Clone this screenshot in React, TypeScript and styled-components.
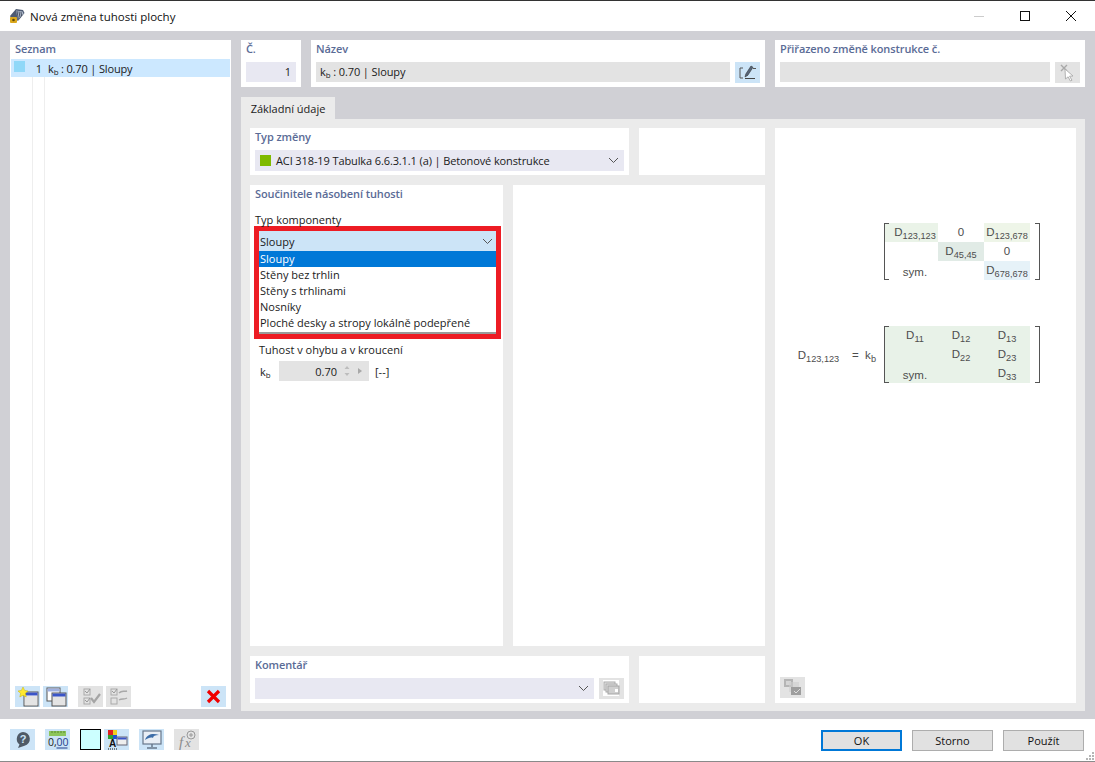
import styled, { createGlobalStyle } from "styled-components";

const GlobalStyle = createGlobalStyle`
  html, body {
    margin: 0;
    padding: 0;
    overflow: hidden;
    background: #fff;
  }
  * {
    box-sizing: border-box;
  }
`;

const UI_FONT = `"Open Sans", "Noto Sans", "Liberation Sans", sans-serif`;

const Window = styled.div`
  width: 1095px;
  height: 762px;
  display: flex;
  flex-direction: column;
  background: #fff;
  border-top: 1px solid #333;
  border-bottom: 1px solid #8a8a8a;
  font-family: ${UI_FONT};
  font-size: 11px;
  color: #1a1a1a;
`;

const TitleBar = styled.div`
  height: 30px;
  flex: none;
  display: flex;
  align-items: center;
  padding-left: 9px;
`;

const TitleText = styled.span`
  margin-left: 5px;
  font-size: 11.5px;
  color: #111;
`;

const WindowControls = styled.div`
  margin-left: auto;
  display: flex;
  align-items: center;
  margin-right: 19px;
  gap: 36px;
`;

const Body = styled.div`
  height: 688px;
  flex: none;
  background: #d0d0d5;
  padding: 9px 10px 0;
  display: flex;
  gap: 10px;
`;

const ListPanel = styled.div`
  width: 221px;
  height: 669px;
  background: #fff;
  display: flex;
  flex-direction: column;
  padding: 0 1px;
`;

const PanelTitle = styled.div`
  height: 18px;
  line-height: 18px;
  margin-bottom: 4px;
  font-weight: 600;
  font-size: 11px;
  letter-spacing: -0.1px;
  color: #5a6b96;
  white-space: nowrap;
`;

const ListTitle = styled(PanelTitle)`
  height: 19px;
  line-height: 18px;
  margin: 0;
  padding-left: 4px;
`;

const ListRow = styled.div`
  height: 18px;
  flex: none;
  background: #cce8ff;
  display: flex;
  align-items: center;
  padding-left: 3px;
`;

const ListSwatch = styled.span`
  width: 11px;
  height: 11px;
  margin-top: -3px;
  background: #90d8f8;
`;

const ListNumber = styled.span`
  width: 16px;
  margin-left: 1px;
  text-align: right;
`;

const ListText = styled.span`
  margin-left: 6px;
  letter-spacing: -0.15px;
`;

const Guides = styled.div`
  flex: 1;
  width: 13px;
  margin-left: 21px;
  border-left: 1px solid #eeeeee;
  border-right: 1px solid #eeeeee;
`;

const ListToolbar = styled.div`
  height: 28px;
  flex: none;
  display: flex;
  padding: 5px 4px 2px;
  gap: 3px;
`;

const ToolGap = styled.span<{ $w: number }>`
  width: ${(p) => p.$w}px;
  flex: none;
`;

const IconButton = styled.div<{ $off?: boolean }>`
  width: 25px;
  height: 21px;
  flex: none;
  display: flex;
  align-items: center;
  justify-content: center;
  background: ${(p) => (p.$off ? "#e3e3e3" : "#cce4f7")};
`;

const RightColumn = styled.div`
  width: 844px;
  display: flex;
  flex-direction: column;
`;

const TopRow = styled.div`
  display: flex;
  gap: 10px;
  height: 47px;
  flex: none;
`;

const Panel = styled.div<{ $w: number; $h?: number }>`
  width: ${(p) => p.$w}px;
  height: ${(p) => p.$h ?? 47}px;
  flex: none;
  background: #fff;
  padding: 0 5px;
`;

const FieldRow = styled.div`
  display: flex;
  gap: 5px;
`;

const Field = styled.div<{ $bg?: string; $right?: boolean }>`
  height: 20px;
  flex: 1;
  background: ${(p) => p.$bg ?? "#e3e3e3"};
  display: flex;
  align-items: center;
  justify-content: ${(p) => (p.$right ? "flex-end" : "flex-start")};
  padding: 0 5px 1px 4px;
  letter-spacing: -0.1px;
`;

const Select = styled.div<{ $w?: number }>`
  height: 21px;
  ${(p) => (p.$w ? `width: ${p.$w}px; flex: none;` : "")}
  background: #e8e8f2;
  display: flex;
  align-items: center;
  padding: 0 5px;
  justify-content: space-between;
`;

const SelectValue = styled.span`
  display: flex;
  align-items: center;
  gap: 5px;
  letter-spacing: -0.11px;
`;

const GreenSquare = styled.span`
  width: 11px;
  height: 11px;
  background: #7fba00;
`;

const Tab = styled.div`
  margin-top: 10px;
  width: 94px;
  height: 22px;
  flex: none;
  background: #ebebeb;
  display: flex;
  align-items: center;
  justify-content: center;
`;

const TabPage = styled.div`
  height: 592px;
  flex: none;
  background: #ebebeb;
  padding: 9px 9px 8px;
  display: flex;
  gap: 10px;
`;

const FormColumn = styled.div`
  width: 515px;
  display: flex;
  flex-direction: column;
  gap: 10px;
`;

const FormRow = styled.div`
  display: flex;
  gap: 10px;
`;

const FieldLabel = styled.div`
  margin-top: 10px;
  height: 13px;
  line-height: 13px;
`;

const Annotation = styled.div`
  width: 247px;
  height: 113px;
  margin-left: -1px;
  border: 5px solid #ed1c24;
  background: #fff;
`;

const OpenSelect = styled.div`
  height: 20px;
  background: #cce4f7;
  display: flex;
  align-items: center;
  justify-content: space-between;
  padding: 0 3px 0 1px;
`;

const OptionList = styled.div`
  border-bottom: 2px solid #9a9a9a;
  height: 83px;
`;

const Option = styled.div<{ $active?: boolean }>`
  height: 16px;
  line-height: 16px;
  padding-left: 1px;
  white-space: nowrap;
  background: ${(p) => (p.$active ? "#0078d7" : "#fff")};
  color: ${(p) => (p.$active ? "#fff" : "#1a1a1a")};
`;

const StiffnessLabel = styled.div`
  margin: 4px 0 0 4px;
  height: 14px;
  line-height: 14px;
`;

const StiffnessRow = styled.div`
  margin: 4px 0 0 5px;
  display: flex;
  align-items: center;
`;

const Symbol = styled.span`
  width: 19px;
`;

const Sub = styled.sub`
  font-size: 0.72em;
  vertical-align: -0.3em;
  line-height: 0;
`;

const DrawSub = styled(Sub)`
  font-size: 9.2px;
  vertical-align: -0.35em;
`;

const NumberBox = styled.div`
  width: 90px;
  height: 20px;
  background: #e3e3e3;
  display: flex;
  align-items: center;
  justify-content: flex-end;
  padding-right: 2px;
  gap: 4px;
`;

const Unit = styled.span`
  margin-left: 6px;
`;

const DrawingPanel = styled.div`
  width: 301px;
  background: #fff;
  display: flex;
  flex-direction: column;
  align-items: flex-end;
  padding: 95px 36px 5px 5px;
  font-family: "Liberation Sans", Arial, sans-serif;
  font-size: 11.5px;
  color: #4d4d4d;
`;

const Formula = styled.div`
  margin-top: 46px;
  display: flex;
  align-items: center;
`;

const FormulaLabel = styled.span`
  margin-right: 8px;
  white-space: pre;
`;

const Matrix = styled.div`
  position: relative;
  width: 156px;
  display: grid;
  grid-template-columns: 53px 46px 46px;
  grid-auto-rows: 19px;
  padding-left: 1px;
  &::before,
  &::after {
    content: "";
    position: absolute;
    top: 0;
    bottom: 0;
    width: 4px;
    border: 1.5px solid #555;
  }
  &::before {
    left: 0;
    border-right: 0;
  }
  &::after {
    right: 0;
    border-left: 0;
  }
`;

const Cell = styled.div<{ $bg?: string }>`
  line-height: 19px;
  text-align: center;
  background: ${(p) => p.$bg ?? "transparent"};
  white-space: nowrap;
  &:nth-child(3n + 1) {
    padding-left: 7px;
  }
`;

const SymCell = styled(Cell)`
  padding-top: 2px;
`;

const CornerButton = styled(IconButton)`
  margin-top: auto;
  align-self: flex-start;
`;

const BottomBar = styled.div`
  flex: 1;
  display: flex;
  align-items: flex-start;
  padding: 10px 11px 0 10px;
  position: relative;
`;

const Swatch = styled.div`
  width: 21px;
  height: 21px;
  flex: none;
  background: #ccffff;
  border: 1.5px solid #000;
`;

const DialogButtons = styled.div`
  margin-left: auto;
  display: flex;
  gap: 10px;
  margin-top: 1px;
`;

const DialogButton = styled.div<{ $primary?: boolean }>`
  width: 81px;
  height: 21px;
  display: flex;
  align-items: center;
  justify-content: center;
  background: #e1e1e1;
  border: ${(p) => (p.$primary ? "2px solid #0078d7" : "1px solid #adadad")};
  color: #111;
`;

const Grip = styled.svg`
  position: absolute;
  right: 1px;
  bottom: 1px;
`;

const Chevron = () => (
  <svg width="11" height="7" viewBox="0 0 11 7" fill="none">
    <path d="M1 1l4.5 4.5L10 1" stroke="#555" strokeWidth="1" />
  </svg>
);

const RollIcon = () => (
  <svg width="16" height="16" viewBox="0 0 16 16">
    <path d="M1 8l6-7 7 1 1.500 3-6 7.500-6 .5z" fill="#4d5a72" />
    <path d="M7 2.500l6.500 1 1 2-5.600 6.200z" fill="#aeb9ca" />
    <path d="M8 3l1.300 8M10 3.500l1 6M12 4l.6 4" stroke="#3e475a" strokeWidth=".9" />
    <rect x="1" y="9" width="7" height="6" rx="1" fill="#dba81c" />
    <circle cx="4.500" cy="12" r="1.300" fill="#5c470c" />
  </svg>
);

const EditIcon = () => (
  <svg width="21" height="17" viewBox="0 0 21 17" fill="none">
    <path d="M6 4H3v10h3" stroke="#555" strokeWidth="1" />
    <path d="M8 14.500h10" stroke="#444" strokeWidth="1" />
    <path d="M8 13l.8-3 5.200-8 2 1.300-5.200 8z" fill="#56657a" stroke="#333" strokeWidth=".6" />
    <path d="M16 4.500h3" stroke="#555" strokeWidth="1" />
  </svg>
);

const PickIcon = () => (
  <svg width="18" height="18" viewBox="0 0 18 18" fill="none">
    <path d="M2 1l6 6M8 1L2 7" stroke="#a8a8a8" strokeWidth="1.400" />
    <path d="M6 5l8 7-3.500.2 2.500 4-1.600.8-2.300-4.200L6.500 15z" fill="#fff" stroke="#aaa" strokeWidth=".9" />
  </svg>
);

const NewIcon = () => (
  <svg width="25" height="21" viewBox="0 0 25 21">
    <rect x="9" y="6" width="14" height="14" fill="#fff" stroke="#555" />
    <rect x="9.500" y="6.500" width="13" height="3" fill="#3a55c8" />
    <rect x="10" y="10" width="12" height="9" fill="#e4e4e4" />
    <path d="M8 1l1.600 3.400L13 5l-2.600 2.300.8 3.700L8 9.200 4.800 11l.8-3.700L3 5l3.400-.6z" fill="#ffe930" stroke="#c9b400" strokeWidth=".5" />
  </svg>
);

const CopyIcon = () => (
  <svg width="25" height="21" viewBox="0 0 25 21">
    <rect x="4" y="2" width="13" height="13" fill="#fff" stroke="#555" />
    <rect x="4.500" y="2.500" width="12" height="3" fill="#9fb0e0" />
    <rect x="9" y="7" width="14" height="13" fill="#e4e4e4" stroke="#555" />
    <rect x="9.500" y="7.500" width="13" height="3" fill="#3a55c8" />
  </svg>
);

const CheckAllIcon = () => (
  <svg width="25" height="21" viewBox="0 0 25 21" fill="none">
    <rect x="6" y="3" width="6" height="6" stroke="#aaa" />
    <rect x="6" y="12" width="6" height="6" stroke="#aaa" />
    <path d="M7 5l2 2 3-4M7 14l2 2 3-4" stroke="#999" />
    <path d="M13 12l3 4 6-8" stroke="#a5a5a5" strokeWidth="2.200" />
  </svg>
);

const CheckSwapIcon = () => (
  <svg width="25" height="21" viewBox="0 0 25 21" fill="none">
    <rect x="5" y="3" width="6" height="6" stroke="#aaa" />
    <rect x="5" y="12" width="6" height="6" stroke="#aaa" />
    <path d="M6 5l2 2 3-4" stroke="#999" />
    <path d="M13 7c3-3 5-1 8-2M21 12c-3 2-5 0-8 2" stroke="#a8a8a8" strokeWidth="1.500" />
  </svg>
);

const DeleteIcon = () => (
  <svg width="15" height="15" viewBox="0 0 15 15" fill="none">
    <path d="M2 2l11 11M13 2L2 13" stroke="#f00000" strokeWidth="3.200" />
  </svg>
);

const WindowsIcon = () => (
  <svg width="25" height="21" viewBox="0 0 25 21">
    <rect x="4" y="2" width="16" height="16" fill="#fff" />
    <rect x="5" y="4" width="11" height="8" fill="#e3e3e3" stroke="#aaa" />
    <rect x="7" y="6" width="11" height="8" fill="#dedede" stroke="#aaa" />
    <rect x="9" y="8" width="11" height="8" fill="#cfcfcf" stroke="#a5a5a5" />
    <rect x="16" y="11" width="3" height="3" fill="#fff" />
  </svg>
);

const SceneIcon = () => (
  <svg width="25" height="21" viewBox="0 0 25 21">
    <rect x="4" y="2" width="9" height="8" fill="#b5b5b5" />
    <rect x="6" y="4" width="5" height="4" fill="#d5d5d5" />
    <rect x="9" y="5" width="10" height="10" fill="#cfcfcf" opacity=".6" />
    <rect x="11" y="10" width="10" height="8" fill="#9e9e9e" />
    <path d="M14 14l2 2 4-4" stroke="#ddd" fill="none" />
  </svg>
);

const HelpIcon = () => (
  <svg width="25" height="21" viewBox="0 0 25 21">
    <path d="M13 3a7 7 0 0 1 1.500 13.800L8 19l1.500-3.500A7 7 0 0 1 13 3z" fill="#4f5a66" />
    <text x="13" y="14" textAnchor="middle" fontSize="11" fontWeight="700" fontFamily="Liberation Sans" fill="#cce4f7">?</text>
  </svg>
);

const DecimalsIcon = () => (
  <svg width="25" height="21" viewBox="0 0 25 21">
    <rect x="4" y="2" width="17" height="5" fill="#8cc55c" />
    <path d="M7 2v2M10 2v2M13 2v2M16 2v2M19 2v2" stroke="#5a8a30" />
    <text x="3" y="17" fontSize="10.500" fontFamily="Open Sans" fill="#222">0,</text>
    <text x="11.500" y="17" fontSize="10.500" fontFamily="Open Sans" fill="#1f3d8a">00</text>
    <path d="M11.500 19h11" stroke="#1f3d8a" />
  </svg>
);

const ColorsIcon = () => (
  <svg width="25" height="21" viewBox="0 0 25 21">
    <rect x="4" y="1" width="5" height="5" fill="#e02020" />
    <rect x="9" y="1" width="4" height="5" fill="#f0d020" />
    <rect x="4" y="6" width="5" height="4" fill="#30a030" />
    <rect x="9" y="6" width="4" height="4" fill="#2050d0" />
    <text x="8.500" y="18" textAnchor="middle" fontSize="10" fontWeight="700" fontFamily="Liberation Sans" fill="#111">A</text>
    <path d="M4 20h10" stroke="#111" strokeDasharray="1 1" />
    <rect x="13" y="8" width="10" height="8" fill="#eee" stroke="#667" />
    <rect x="13.500" y="8.500" width="9" height="2" fill="#3a55c8" />
  </svg>
);

const MonitorIcon = () => (
  <svg width="25" height="21" viewBox="0 0 25 21">
    <rect x="4" y="2" width="18" height="13" fill="#e8eef5" stroke="#67778a" strokeWidth="1.200" />
    <path d="M6 11c2-6 8-7 14-5-4 0-6 1-6 3-2-1-5 0-8 2z" fill="#3d6da8" />
    <path d="M13 15v3M8 19h10" stroke="#67778a" strokeWidth="1.500" />
  </svg>
);

const FxIcon = () => (
  <svg width="25" height="21" viewBox="0 0 25 21">
    <text x="5" y="18" fontSize="15" fontStyle="italic" fontFamily="Liberation Serif" fill="#8c8c8c">f</text>
    <text x="11" y="18" fontSize="13" fontStyle="italic" fontFamily="Liberation Serif" fill="#8c8c8c">x</text>
    <circle cx="17" cy="6" r="4" fill="none" stroke="#999" />
    <path d="M15 6h4M17 4v4" stroke="#999" />
  </svg>
);

const Spinner = () => (
  <svg width="26" height="14" viewBox="0 0 26 14">
    <path d="M6 2l2.500 3h-5zM6 12L3.500 9h5z" fill="#bdbdbd" />
    <path d="M17 4l4 3-4 3z" fill="#a8a8a8" />
  </svg>
);

const options = [
  "Sloupy",
  "Stěny bez trhlin",
  "Stěny s trhlinami",
  "Nosníky",
  "Ploché desky a stropy lokálně podepřené",
];

export default function App() {
  return (
    <>
      <GlobalStyle />
      <Window>
        <TitleBar>
          <RollIcon />
          <TitleText>Nová změna tuhosti plochy</TitleText>
          <WindowControls>
            <svg width="10" height="10" viewBox="0 0 10 10">
              <path d="M0 5.500h10" stroke="#cccccc" />
            </svg>
            <svg width="10" height="10" viewBox="0 0 10 10" fill="none">
              <rect x=".5" y=".5" width="9" height="9" stroke="#111" />
            </svg>
            <svg width="10" height="10" viewBox="0 0 10 10">
              <path d="M0 0l10 10M10 0L0 10" stroke="#111" />
            </svg>
          </WindowControls>
        </TitleBar>

        <Body>
          <ListPanel>
            <ListTitle>Seznam</ListTitle>
            <ListRow>
              <ListSwatch />
              <ListNumber>1</ListNumber>
              <ListText>
                k<Sub>b</Sub> : 0.70 | Sloupy
              </ListText>
            </ListRow>
            <Guides />
            <ListToolbar>
              <IconButton><NewIcon /></IconButton>
              <IconButton><CopyIcon /></IconButton>
              <ToolGap $w={4} />
              <IconButton $off><CheckAllIcon /></IconButton>
              <IconButton $off><CheckSwapIcon /></IconButton>
              <ToolGap $w={64} />
              <IconButton><DeleteIcon /></IconButton>
            </ListToolbar>
          </ListPanel>

          <RightColumn>
            <TopRow>
              <Panel $w={60}>
                <PanelTitle>Č.</PanelTitle>
                <Field $bg="#e8e8f2" $right>1</Field>
              </Panel>
              <Panel $w={454}>
                <PanelTitle>Název</PanelTitle>
                <FieldRow>
                  <Field>
                    <span>k<Sub>b</Sub> : 0.70 | Sloupy</span>
                  </Field>
                  <IconButton><EditIcon /></IconButton>
                </FieldRow>
              </Panel>
              <Panel $w={310}>
                <PanelTitle>Přiřazeno změně konstrukce č.</PanelTitle>
                <FieldRow>
                  <Field />
                  <IconButton $off><PickIcon /></IconButton>
                </FieldRow>
              </Panel>
            </TopRow>

            <Tab>Základní údaje</Tab>
            <TabPage>
              <FormColumn>
                <FormRow>
                  <Panel $w={379}>
                    <PanelTitle>Typ změny</PanelTitle>
                    <Select>
                      <SelectValue>
                        <GreenSquare />
                        ACI 318-19 Tabulka 6.6.3.1.1 (a) | Betonové konstrukce
                      </SelectValue>
                      <Chevron />
                    </Select>
                  </Panel>
                  <Panel $w={126} />
                </FormRow>

                <FormRow>
                  <Panel $w={253} $h={461}>
                    <PanelTitle>Součinitele násobení tuhosti</PanelTitle>
                    <FieldLabel>Typ komponenty</FieldLabel>
                    <Annotation>
                      <OpenSelect>
                        Sloupy
                        <Chevron />
                      </OpenSelect>
                      <OptionList>
                        {options.map((item, index) => (
                          <Option key={item} $active={index === 0}>{item}</Option>
                        ))}
                      </OptionList>
                    </Annotation>
                    <StiffnessLabel>Tuhost v ohybu a v kroucení</StiffnessLabel>
                    <StiffnessRow>
                      <Symbol>k<Sub>b</Sub></Symbol>
                      <NumberBox>
                        0.70
                        <Spinner />
                      </NumberBox>
                      <Unit>[--]</Unit>
                    </StiffnessRow>
                  </Panel>
                  <Panel $w={252} $h={461} />
                </FormRow>

                <FormRow>
                  <Panel $w={379}>
                    <PanelTitle>Komentář</PanelTitle>
                    <FieldRow>
                      <Select $w={339}>
                        <span />
                        <Chevron />
                      </Select>
                      <IconButton $off><WindowsIcon /></IconButton>
                    </FieldRow>
                  </Panel>
                  <Panel $w={126} />
                </FormRow>
              </FormColumn>

              <DrawingPanel>
                <Matrix>
                  <Cell $bg="#eaf3e8">D<DrawSub>123,123</DrawSub></Cell>
                  <Cell>0</Cell>
                  <Cell $bg="#eef5e8">D<DrawSub>123,678</DrawSub></Cell>
                  <Cell />
                  <Cell $bg="#e1ebe6">D<DrawSub>45,45</DrawSub></Cell>
                  <Cell>0</Cell>
                  <SymCell>sym.</SymCell>
                  <Cell />
                  <Cell $bg="#e6f2f8">D<DrawSub>678,678</DrawSub></Cell>
                </Matrix>
                <Formula>
                  <FormulaLabel>D<DrawSub>123,123</DrawSub>    =  k<DrawSub>b</DrawSub></FormulaLabel>
                  <Matrix>
                    <Cell $bg="#e8f2e8">D<DrawSub>11</DrawSub></Cell>
                    <Cell $bg="#e8f2e8">D<DrawSub>12</DrawSub></Cell>
                    <Cell $bg="#e8f2e8">D<DrawSub>13</DrawSub></Cell>
                    <Cell $bg="#e8f2e8" />
                    <Cell $bg="#e8f2e8">D<DrawSub>22</DrawSub></Cell>
                    <Cell $bg="#e8f2e8">D<DrawSub>23</DrawSub></Cell>
                    <SymCell $bg="#e8f2e8">sym.</SymCell>
                    <Cell $bg="#e8f2e8" />
                    <Cell $bg="#e8f2e8">D<DrawSub>33</DrawSub></Cell>
                  </Matrix>
                </Formula>
                <CornerButton $off><SceneIcon /></CornerButton>
              </DrawingPanel>
            </TabPage>
          </RightColumn>
        </Body>

        <BottomBar>
          <IconButton><HelpIcon /></IconButton>
          <ToolGap $w={10} />
          <IconButton><DecimalsIcon /></IconButton>
          <ToolGap $w={10} />
          <Swatch />
          <ToolGap $w={3} />
          <IconButton><ColorsIcon /></IconButton>
          <ToolGap $w={10} />
          <IconButton><MonitorIcon /></IconButton>
          <ToolGap $w={10} />
          <IconButton $off><FxIcon /></IconButton>
          <DialogButtons>
            <DialogButton $primary>OK</DialogButton>
            <DialogButton>Storno</DialogButton>
            <DialogButton>Použít</DialogButton>
          </DialogButtons>
          <Grip width="9" height="9" viewBox="0 0 9 9">
            <path d="M7 1h2v2H7zM4 4h2v2H4zM7 4h2v2H7zM1 7h2v2H1zM4 7h2v2H4zM7 7h2v2H7z" fill="#b5b5b5" />
          </Grip>
        </BottomBar>
      </Window>
    </>
  );
}
